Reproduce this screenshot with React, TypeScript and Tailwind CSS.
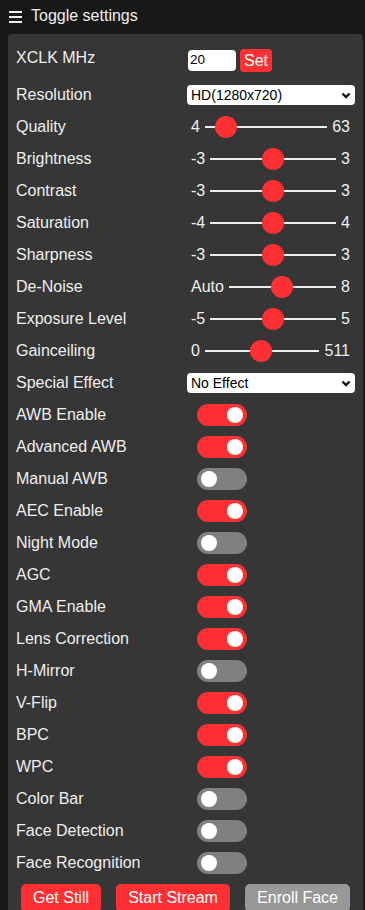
import React from "react";

type SliderRow = { label: string; min: string; max: string; pos: number };

const sliders: SliderRow[] = [
    { label: "Quality", min: "4", max: "63", pos: 0.1 },
    { label: "Brightness", min: "-3", max: "3", pos: 0.5 },
    { label: "Contrast", min: "-3", max: "3", pos: 0.5 },
    { label: "Saturation", min: "-4", max: "4", pos: 0.5 },
    { label: "Sharpness", min: "-3", max: "3", pos: 0.5 },
    { label: "De-Noise", min: "Auto", max: "8", pos: 0.49 },
    { label: "Exposure Level", min: "-5", max: "5", pos: 0.5 },
    { label: "Gainceiling", min: "0", max: "511", pos: 0.49 },
];

const toggles: [string, boolean][] = [
    ["AWB Enable", true],
    ["Advanced AWB", true],
    ["Manual AWB", false],
    ["AEC Enable", true],
    ["Night Mode", false],
    ["AGC", true],
    ["GMA Enable", true],
    ["Lens Correction", true],
    ["H-Mirror", false],
    ["V-Flip", true],
    ["BPC", true],
    ["WPC", true],
    ["Color Bar", false],
    ["Face Detection", false],
    ["Face Recognition", false],
];

function Label({ children }: { children: React.ReactNode }) {
    return <div className="w-[172px] shrink-0 leading-[22px]">{children}</div>;
}

function FakeSelect({ value }: { value: string }) {
    return (
        <div className="ml-[-1px] flex h-[20px] flex-1 items-center justify-between rounded-[4px] bg-white pl-[4px] pr-[4px] text-[14px] text-black">
            <span>{value}</span>
            <svg width="10" height="7" viewBox="0 0 10 7">
                <polyline points="1.5,1.5 5,5 8.5,1.5" fill="none" stroke="#111" strokeWidth="2.4" />
            </svg>
        </div>
    );
}

function Slider({ min, max, pos }: SliderRow) {
    return (
        <div className="flex flex-1 items-center pl-[3px] pr-[5px]">
            <span className="pr-[5px]">{min}</span>
            <div className="relative h-[22px] flex-1">
                <div className="absolute left-0 right-0 top-[10px] h-[2px] bg-[#efefef]" />
                <div
                    className="absolute top-0 h-[22px] w-[22px] -translate-x-1/2 rounded-full bg-[#ff3034]"
                    style={{ left: `calc(11px + ${pos} * (100% - 22px))` }}
                />
            </div>
            <span className="pl-[5px]">{max}</span>
        </div>
    );
}

function Switch({ on }: { on: boolean }) {
    return (
        <div
            className={`ml-[9px] flex h-[22px] w-[50px] items-center rounded-full px-[4px] ${
                on ? "justify-end bg-[#ff3034]" : "justify-start bg-[#808080]"
            }`}>
            <div className="h-[16px] w-[16px] rounded-full bg-white" />
        </div>
    );
}

export default function App() {
    return (
        <div className="min-h-[910px] bg-[#181818] font-['Liberation_Sans',Arial,sans-serif] text-[16px] text-[#efefef]">
            <div className="flex h-[34px] items-center gap-[9px] pb-[2px] pl-[9px]">
                <svg width="13" height="13" viewBox="0 0 13 13">
                    <rect x="0" y="1" width="13" height="2" fill="#efefef" />
                    <rect x="0" y="6" width="13" height="2" fill="#efefef" />
                    <rect x="0" y="11" width="13" height="2" fill="#efefef" />
                </svg>
                <span>Toggle settings</span>
            </div>

            <div className="ml-[8px] flex w-[355px] flex-col rounded-t-[4px] bg-[#363636] px-[8px] pb-[8px] pt-[8px]">
                <div className="mb-[6px] mt-[5px] flex h-[26px] items-start">
                    <Label>XCLK MHz</Label>
                    <div className="mt-[2px] flex items-center gap-[4px]">
                        <div className="flex h-[21px] w-[48px] items-center rounded-[4px] bg-white pl-[2px] text-[13.5px] text-black">
                            20
                        </div>
                        <div className="flex h-[23px] w-[32px] items-center justify-center rounded-[4px] bg-[#ff3034] text-white">
                            Set
                        </div>
                    </div>
                </div>

                <div className="my-[5px] flex h-[22px] items-center">
                    <Label>Resolution</Label>
                    <FakeSelect value="HD(1280x720)" />
                </div>

                {sliders.map((s) => (
                    <div key={s.label} className="my-[5px] flex h-[22px] items-center">
                        <Label>{s.label}</Label>
                        <Slider {...s} />
                    </div>
                ))}

                <div className="my-[5px] flex h-[22px] items-center">
                    <Label>Special Effect</Label>
                    <FakeSelect value="No Effect" />
                </div>

                {toggles.map(([label, on]) => (
                    <div key={label} className="my-[5px] flex h-[22px] items-center">
                        <Label>{label}</Label>
                        <Switch on={on} />
                    </div>
                ))}

                <div className="flex justify-between">
                    <button className="m-[5px] rounded-[5px] bg-[#ff3034] px-[12px] leading-[28px] text-white">
                        Get Still
                    </button>
                    <button className="m-[5px] rounded-[5px] bg-[#ff3034] px-[12px] leading-[28px] text-white">
                        Start Stream
                    </button>
                    <button className="m-[5px] rounded-[5px] bg-[#989898] px-[12px] leading-[28px] text-white">
                        Enroll Face
                    </button>
                </div>
            </div>
        </div>
    );
}
